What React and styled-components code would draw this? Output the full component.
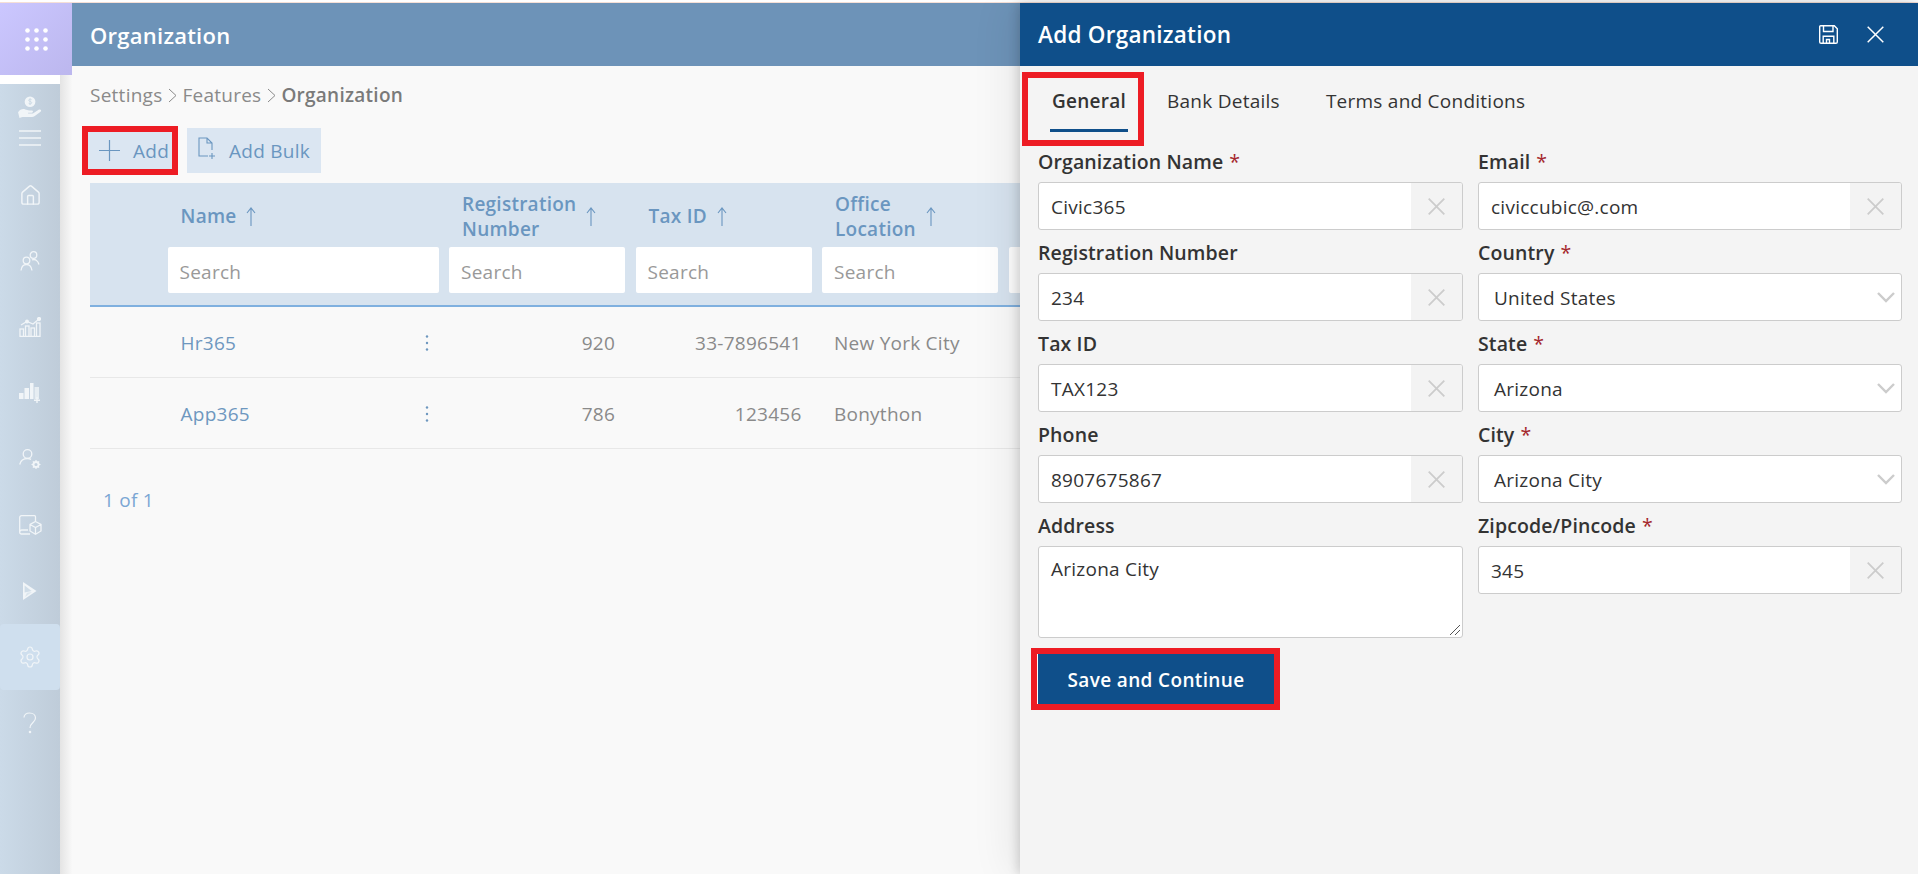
import React from 'react'
import styled, { createGlobalStyle } from 'styled-components'
import { Settings, House } from 'lucide-react'

const GlobalStyle = createGlobalStyle`
html, body {
  margin: 0;
  padding: 0;
  height: 100%;
  overflow: hidden;
  background: #fff;
}
* { box-sizing: border-box; }
body {
  font-family: "Open Sans", "Noto Sans", sans-serif;
  font-size: 19px;
  letter-spacing: 0.25px;
}
`

const Page = styled.div`
width: 1918px;
height: 874px;
display: flex;
flex-direction: column;
overflow: hidden;
`

const TopStrip = styled.div`
height: 3px;
background: #fff;
border-bottom: 1px solid #f6dfd6;
`

const Body = styled.div`
flex: 1;
display: flex;
min-height: 0;
`

const Rail = styled.div`
width: 72px;
display: flex;
flex-direction: column;
background: #f9f9f9;
`

const Launcher = styled.div`
height: 72px;
display: flex;
align-items: center;
justify-content: center;
background: linear-gradient(135deg, #cbc7ff, #bcb7ee);
position: relative;
z-index: 1;
`

const RailBody = styled.div`
flex: 1;
padding-top: 9px;
background: linear-gradient(90deg, #fff 60px, #e4e4e4 60px, #f8f8f8 72px);
`

const Sidebar = styled.nav`
width: 60px;
height: 100%;
background: linear-gradient(90deg, #cbdae8, #bfccd9);
color: #f1f5f8;
`

const LogoBlock = styled.div`
height: 78px;
display: flex;
flex-direction: column;
align-items: center;
padding-top: 12px;
gap: 12px;
`

const NavItem = styled.div`
height: 66px;
display: flex;
align-items: center;
justify-content: center;
border-radius: 4px;
background: ${props => props.$active ? "#cfdfee" : "transparent"};
`

const Main = styled.main`
flex: 1;
min-width: 0;
background: #f9f9f9;
overflow: hidden;
`

const PageHeader = styled.header`
height: 63px;
display: flex;
align-items: center;
padding-left: 18px;
background: #6d93b8;
color: #fff;
font-size: 22px;
font-weight: 600;
`

const Breadcrumb = styled.div`
display: flex;
align-items: center;
gap: 5.5px;
height: 26px;
margin: 16px 0 0 18px;
color: #8a8a8a;
`

const Crumb = styled.span`
font-weight: ${props => props.$current ? 600 : 400};
color: ${props => props.$current ? "#7a7a7a" : "#8a8a8a"};
`

const Toolbar = styled.div`
display: flex;
align-items: center;
height: 45px;
margin: 20px 0 0 16px;
gap: 15px;
`

const ToolButton = styled.button`
display: flex;
align-items: center;
height: ${props => props.$marked ? 37 : 45}px;
width: ${props => props.$marked ? 84 : 134}px;
padding: 0 0 0 11px;
gap: 13px;
border: none;
background: #dbe6f2;
color: #6a96c0;
font: inherit;
letter-spacing: inherit;
white-space: nowrap;
overflow: ${props => props.$marked ? "visible" : "hidden"};
outline: ${props => props.$marked ? "6px solid #ed1c24" : "none"};
`

const Table = styled.div`
margin: 10px 0 0 18px;
width: 1100px;
`

const Grid = styled.div`
display: grid;
grid-template-columns: 67px 271px repeat(4, 176px);
column-gap: 10.5px;
`

const TableHead = styled(Grid)`
height: 124px;
grid-template-rows: 64px 46px;
background: #d7e3ef;
border-bottom: 2px solid #7fb0df;
`

const HeadCell = styled.div`
grid-row: 1;
display: flex;
align-items: center;
gap: 10px;
padding: 3px 0 0 13px;
color: #6a96c0;
font-weight: 600;
line-height: 25px;
`

const Spacer = styled.div`
grid-row: ${props => props.$row || "auto"};
`

const SearchBox = styled.div`
grid-row: 2;
display: flex;
align-items: center;
padding: 3px 0 0 12px;
background: #fff;
border-radius: 2px;
color: #999;
`

const Row = styled(Grid)`
height: 71px;
padding-top: 2px;
align-items: center;
border-bottom: 1px solid #e8e8e8;
`

const NameCell = styled.div`
display: flex;
align-items: center;
justify-content: space-between;
padding: 0 10px 0 13px;
color: #6e97bf;
`

const NumberCell = styled.div`
text-align: right;
padding-right: 10px;
color: #8a8a8a;
`

const TextCell = styled.div`
padding-left: 12px;
color: #8a8a8a;
`

const Pager = styled.div`
margin: 38px 0 0 13px;
line-height: 26px;
color: #7ba6d4;
`

const Panel = styled.aside`
width: 898px;
display: flex;
flex-direction: column;
background: #f4f4f4;
box-shadow: -2px 0 10px rgba(0, 0, 0, 0.16), -8px 0 40px rgba(0, 0, 0, 0.08);
position: relative;
z-index: 2;
`

const PanelHeader = styled.header`
height: 63px;
display: flex;
align-items: center;
justify-content: space-between;
padding: 0 34px 0 18px;
background: #0f4f8a;
color: #fff;
font-size: 22.5px;
font-weight: 600;
`

const HeaderActions = styled.div`
display: flex;
align-items: center;
gap: 29px;
`

const TabList = styled.div`
display: flex;
gap: 5px;
margin: 12px 0 9px 8px;
`

const Tab = styled.div`
position: relative;
height: 62px;
padding: 10px ${props => props.$active ? 12 : 17}px 0 24px;
line-height: 26px;
color: #333;
font-weight: ${props => props.$active ? 600 : 400};
outline: ${props => props.$active ? "6px solid #ed1c24" : "none"};
&::after {
  content: "";
  display: ${props => props.$active ? "block" : "none"};
  position: absolute;
  left: 22px;
  right: 10px;
  bottom: 8px;
  height: 3px;
  background: #0f4f8a;
}
`

const Form = styled.div`
display: grid;
grid-template-columns: 425px 424px;
column-gap: 15px;
padding-left: 18px;
align-items: start;
`

const Field = styled.div`
margin-bottom: 10px;
`

const Label = styled.div`
height: 26px;
margin-bottom: 7px;
line-height: 26px;
color: #333;
font-weight: 600;
font-size: 19.5px;
letter-spacing: 0.12px;
`

const Required = styled.span`
margin-left: 6px;
color: #a4262c;
font-weight: 400;
`

const InputBox = styled.div`
height: 48px;
display: flex;
align-items: stretch;
background: #fff;
border: 1px solid #ccc;
border-radius: 3px;
color: #333;
overflow: hidden;
`

const InputText = styled.div`
flex: 1;
display: flex;
align-items: center;
padding: 2px 0 0 ${props => props.$select ? 15 : 12}px;
`

const ClearButton = styled.div`
width: 51px;
display: flex;
align-items: center;
justify-content: center;
background: #f3f3f3;
color: #ccc;
`

const SelectArrow = styled.div`
width: 30px;
display: flex;
align-items: center;
justify-content: center;
color: #ccc;
`

const TextArea = styled.div`
position: relative;
height: 92px;
padding: 9px 12px;
background: #fff;
border: 1px solid #ccc;
border-radius: 3px;
color: #333;
`

const Grip = styled.svg`
position: absolute;
right: 1px;
bottom: 1px;
`

const SaveButton = styled.button`
display: block;
width: 237px;
height: 50px;
margin: 6px 0 0 17px;
padding: 2px 0 0;
border: none;
border-left: 1px solid #fff;
background: #0f4f8a;
color: #fff;
font: inherit;
font-weight: 600;
letter-spacing: 0.35px;
outline: 6px solid #ed1c24;
`

function GridDots() {
  const spots = [0, 1, 2]
  return (
    <svg width="23" height="23" viewBox="0 0 23 23" fill="#fff">
      {spots.map(y => spots.map(x => (
        <circle key={`${x}-${y}`} cx={2.5 + x * 9} cy={2.5 + y * 9} r="2.300" />
      )))}
    </svg>
  )
}

function HandCoin() {
  return (
    <svg width="27" height="22" viewBox="0 0 27 23" fill="currentColor">
      <circle cx="13" cy="6" r="5.600" />
      <path d="M14.600 3.800c-1-.9-3-.7-3 .7 0 1.600 3.200.9 3.200 2.500 0 1.400-2.200 1.500-3.300.6M13 2.600v6.800" fill="none" stroke="#c8d7e4" strokeWidth="0.900" />
      <path d="M0.500 17c2-3 5-4 7.500-3l4 1.200h3c1.500 0 1.500 2.200 0 2.200h-4v.8h5l6-3.700c2-1 3.500.6 2 2l-6 4.500c-1 .7-2 1-3 1H5l-3 1z" />
    </svg>
  )
}

function MenuLines() {
  return (
    <svg width="22" height="16" viewBox="0 0 22 16" stroke="currentColor" strokeWidth="1.400">
      <path d="M0 1h22M0 8h22M0 15h22" />
    </svg>
  )
}

function PeopleIcon() {
  return (
    <svg width="20" height="20" viewBox="0 0 20 20" fill="none" stroke="currentColor" strokeWidth="1.300">
      <circle cx="6.500" cy="9.500" r="3.300" />
      <path d="M1 19.500c.4-3.500 2.500-6 5.500-6 3 0 5 2.500 5.500 6" />
      <circle cx="13.500" cy="4" r="3.300" />
      <path d="M12 9c3-1.500 6 .5 7 4.500" />
    </svg>
  )
}

function ChartIcon() {
  return (
    <svg width="22" height="20" viewBox="0 0 22 20" fill="none" stroke="currentColor" strokeWidth="1.300">
      <path d="M1 19.500h20" />
      <rect x="1" y="12" width="3.500" height="7.500" />
      <rect x="6.500" y="9" width="3.500" height="10.500" />
      <rect x="12" y="11" width="3.500" height="8.500" />
      <rect x="17.500" y="6" width="3.500" height="13.500" />
      <path d="M2 8l6-3.500 6 2.500 6-5" />
      <circle cx="20" cy="2" r="1.500" fill="currentColor" />
      <circle cx="8" cy="4.500" r="1.300" fill="currentColor" />
    </svg>
  )
}

function BarsPlusIcon() {
  return (
    <svg width="22" height="20" viewBox="0 0 22 20" fill="currentColor">
      <rect x="0" y="10" width="4.500" height="6" />
      <rect x="5.500" y="5" width="4.500" height="11" />
      <rect x="11" y="0" width="3.500" height="16" />
      <rect x="15.500" y="4" width="4.500" height="12" opacity="0.750" />
      <path d="M15 17.200h6M18 14v6" fill="none" stroke="currentColor" strokeWidth="1.400" />
    </svg>
  )
}

function UserGearIcon() {
  return (
    <svg width="23" height="21" viewBox="0 0 23 21" fill="none" stroke="currentColor" strokeWidth="1.300">
      <circle cx="8.500" cy="5" r="4.300" />
      <path d="M0.700 15.500c.8-3.500 3.600-6 7.800-6 1.500 0 2.500.3 3.500.8" />
      <circle cx="17" cy="15.500" r="2.600" strokeWidth="2" />
      <path d="M17 11v2M17 18v2M12.500 15.500h2M19.500 15.500h2M13.900 12.400l1.300 1.300M18.800 17.300l1.300 1.300M20.100 12.400l-1.300 1.300M15.200 17.300l-1.300 1.300" strokeWidth="1.200" />
    </svg>
  )
}

function BookBoxIcon() {
  return (
    <svg width="23" height="20" viewBox="0 0 23 20" fill="none" stroke="currentColor" strokeWidth="1.300">
      <path d="M11 19H2.500C1.500 19 .7 18.200 .7 17.200V2.500C.7 1.500 1.500.7 2.500.7h13c.6 0 1 .4 1 1V6" />
      <path d="M.7 16.500c.2-1 1-1.500 2-1.500H9" />
      <path d="M16.500 6.500l5.500 3v6.500l-5.500 3.200-5.500-3.200V9.500zM11 9.500l5.500 3 5.500-3M16.500 12.500v6.700" />
    </svg>
  )
}

function ArrowMarkIcon() {
  return (
    <svg width="14" height="18" viewBox="0 0 14 18">
      <path d="M0 0l13.500 9L0 18z" fill="currentColor" />
      <path d="M1.600 3.500l7 5.500-7 1.500z" fill="#c8d7e4" opacity="0.800" />
      <path d="M2 15l7-5-5 .8z" fill="#c8d7e4" opacity="0.500" />
    </svg>
  )
}

function QuestionIcon() {
  return (
    <svg width="14" height="22" viewBox="0 0 14 22" fill="none" stroke="currentColor" strokeWidth="1.200">
      <path d="M1 5.500C1 2.500 3.500 1 6.500 1c3.500 0 6 2 6 5 0 4.500-5.500 4.500-5.500 10" />
      <circle cx="7" cy="20" r="0.700" fill="currentColor" />
    </svg>
  )
}

function CrumbChevron() {
  return (
    <svg width="9" height="15" viewBox="0 0 9 15" fill="none" stroke="#8a8a8a" strokeWidth="1">
      <path d="M1 1l7 6.500-7 6.500" />
    </svg>
  )
}

function PlusIcon() {
  return (
    <svg width="21" height="21" viewBox="0 0 21 21" stroke="currentColor" strokeWidth="1.200">
      <path d="M0 10.500h21M10.500 0v21" />
    </svg>
  )
}

function FilePlusIcon() {
  return (
    <svg width="18" height="22" viewBox="0 0 18 22" fill="none" stroke="currentColor" strokeWidth="1.100" style={{ marginTop: -6 }}>
      <path d="M10 19H1V1h8l5 5v7M9 1v5h5M11 19h6M14 16v6" />
    </svg>
  )
}

function SortArrow() {
  return (
    <svg width="10" height="19" viewBox="0 0 10 19" fill="none" stroke="currentColor" strokeWidth="1.100">
      <path d="M5 19V1M1 6l4-5 4 5" />
    </svg>
  )
}

function MoreDots() {
  return (
    <svg width="4" height="16" viewBox="0 0 4 16" fill="currentColor">
      <circle cx="2" cy="1.500" r="1.200" />
      <circle cx="2" cy="8" r="1.200" />
      <circle cx="2" cy="14.500" r="1.200" />
    </svg>
  )
}

function XMark({ weight }) {
  return (
    <svg width="17" height="17" viewBox="0 0 17 17" stroke="currentColor" strokeWidth={weight}>
      <path d="M0.700 0.700l15.600 15.600M16.300 0.700L0.700 16.300" />
    </svg>
  )
}

function Chevron() {
  return (
    <svg width="18" height="11" viewBox="0 0 18 11" fill="none" stroke="currentColor" strokeWidth="2.400">
      <path d="M1 1l8 8 8-8" />
    </svg>
  )
}

function FloppyIcon() {
  return (
    <svg width="19" height="19" viewBox="0 0 19 19" fill="none" stroke="currentColor" strokeWidth="1.400">
      <path d="M1.700 .7h13.600l3 3v13.200c0 .8-.6 1.400-1.400 1.400H2.100c-.8 0-1.400-.6-1.400-1.400V1.700c0-.6.4-1 1-1z" />
      <path d="M4.500 1v5.500h9.500V1M4.200 18.300v-7h10.600v7M7.500 18v-3.500h3V18" />
    </svg>
  )
}

const rows = [
  { name: "Hr365", reg: "920", tax: "33-7896541", office: "New York City" },
  { name: "App365", reg: "786", tax: "123456", office: "Bonython" },
]

const heads = [
  ["Name"],
  ["Registration", "Number"],
  ["Tax ID"],
  ["Office", "Location"],
]

function TextField({ label, required, value }) {
  return (
    <Field>
      <Label>{label}{required && <Required>*</Required>}</Label>
      <InputBox>
        <InputText>{value}</InputText>
        <ClearButton><XMark weight={1.8} /></ClearButton>
      </InputBox>
    </Field>
  )
}

function SelectField({ label, value }) {
  return (
    <Field>
      <Label>{label}<Required>*</Required></Label>
      <InputBox>
        <InputText $select>{value}</InputText>
        <SelectArrow><Chevron /></SelectArrow>
      </InputBox>
    </Field>
  )
}

function App() {
  return (
    <Page>
      <GlobalStyle />
      <TopStrip />
      <Body>
        <Rail>
          <Launcher><GridDots /></Launcher>
          <RailBody>
            <Sidebar>
              <LogoBlock>
                <HandCoin />
                <MenuLines />
              </LogoBlock>
              <NavItem><House size={23} strokeWidth={1.5} /></NavItem>
              <NavItem><PeopleIcon /></NavItem>
              <NavItem><ChartIcon /></NavItem>
              <NavItem><BarsPlusIcon /></NavItem>
              <NavItem><UserGearIcon /></NavItem>
              <NavItem><BookBoxIcon /></NavItem>
              <NavItem><ArrowMarkIcon /></NavItem>
              <NavItem $active><Settings size={24} strokeWidth={1.2} /></NavItem>
              <NavItem><QuestionIcon /></NavItem>
            </Sidebar>
          </RailBody>
        </Rail>

        <Main>
          <PageHeader>Organization</PageHeader>
          <Breadcrumb>
            <Crumb>Settings</Crumb>
            <CrumbChevron />
            <Crumb>Features</Crumb>
            <CrumbChevron />
            <Crumb $current>Organization</Crumb>
          </Breadcrumb>
          <Toolbar>
            <ToolButton $marked><PlusIcon />Add</ToolButton>
            <ToolButton><FilePlusIcon />Add Bulk</ToolButton>
          </Toolbar>
          <Table>
            <TableHead>
              <Spacer $row={1} />
              {heads.map(([first, second]) => (
                <HeadCell key={first}>
                  <span>{first}{second && <br />}{second}</span>
                  <SortArrow />
                </HeadCell>
              ))}
              <Spacer $row={2} />
              {[0, 1, 2, 3, 4].map(i => <SearchBox key={i}>Search</SearchBox>)}
            </TableHead>
            {rows.map(item => (
              <Row key={item.name}>
                <Spacer />
                <NameCell>{item.name}<MoreDots /></NameCell>
                <NumberCell>{item.reg}</NumberCell>
                <NumberCell>{item.tax}</NumberCell>
                <TextCell>{item.office}</TextCell>
              </Row>
            ))}
            <Pager>1 of 1</Pager>
          </Table>
        </Main>

        <Panel>
          <PanelHeader>
            Add Organization
            <HeaderActions>
              <FloppyIcon />
              <XMark weight={1.5} />
            </HeaderActions>
          </PanelHeader>
          <TabList>
            <Tab $active>General</Tab>
            <Tab>Bank Details</Tab>
            <Tab>Terms and Conditions</Tab>
          </TabList>
          <Form>
            <TextField label="Organization Name" required value="Civic365" />
            <TextField label="Email" required value="civiccubic@.com" />
            <TextField label="Registration Number" value="234" />
            <SelectField label="Country" value="United States" />
            <TextField label="Tax ID" value="TAX123" />
            <SelectField label="State" value="Arizona" />
            <TextField label="Phone" value="8907675867" />
            <SelectField label="City" value="Arizona City" />
            <Field>
              <Label>Address</Label>
              <TextArea>
                Arizona City
                <Grip width="12" height="12" viewBox="0 0 12 12" stroke="#555" strokeWidth="1">
                  <path d="M1 11L11 1M6 11l5-5" />
                </Grip>
              </TextArea>
            </Field>
            <TextField label="Zipcode/Pincode" required value="345" />
          </Form>
          <SaveButton>Save and Continue</SaveButton>
        </Panel>
      </Body>
    </Page>
  )
}

export default App
